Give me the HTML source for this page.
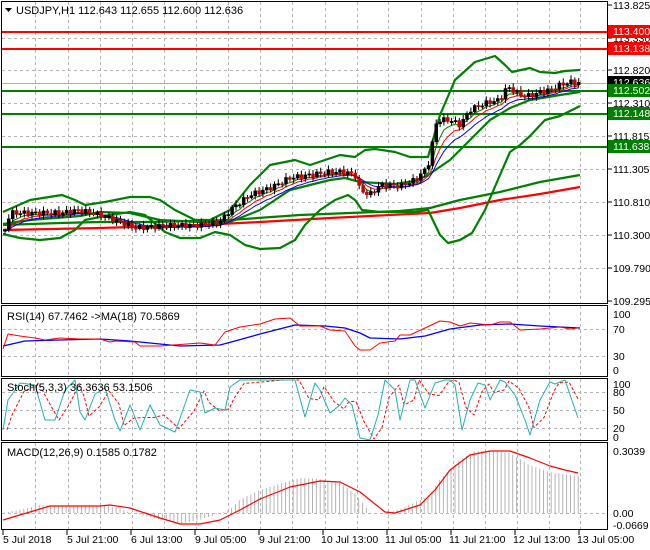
<!DOCTYPE html>
<html><head><meta charset="utf-8"><style>
html,body{margin:0;padding:0;background:#fff;width:650px;height:550px;overflow:hidden}
svg{display:block;font-family:"Liberation Sans",sans-serif;font-size:11px}
</style></head><body>
<svg id="s" width="650" height="550" viewBox="0 0 650 550" xmlns="http://www.w3.org/2000/svg">
<rect width="650" height="550" fill="#fff"/>
<g id="grid" stroke="#b4b4b4" stroke-dasharray="3,3" stroke-width="1"></g>
<g id="dyn"></g>
<!-- panel borders -->
<g fill="none" stroke="#000" stroke-width="1">
<rect x="1.5" y="1.5" width="606" height="302"/>
<rect x="1.5" y="305.5" width="606" height="71"/>
<rect x="1.5" y="378.5" width="606" height="62"/>
<rect x="1.5" y="442.5" width="606" height="87"/>
</g>
<g fill="#000">
<path d="M5 8h7l-3.5 4z"/>
<text x="16" y="14">USDJPY,H1  112.643 112.655 112.600 112.636</text>
<text x="7" y="320">RSI(14) 67.7462  -&gt;MA(18) 70.5869</text>
<text x="7" y="391">Stoch(5,3,3) 36.3636 53.1506</text>
<text x="7" y="456">MACD(12,26,9) 0.1585 0.1782</text>
</g>
<g fill="#000" font-size="10.5">
<text x="613" y="9">113.825</text>
<text x="613" y="42">113.330</text>
<text x="613" y="74">112.820</text>
<text x="613" y="107">112.310</text>
<text x="613" y="140">111.815</text>
<text x="613" y="173">111.305</text>
<text x="613" y="206">110.810</text>
<text x="613" y="239">110.300</text>
<text x="613" y="272">109.790</text>
<text x="613" y="305">109.295</text>
<text x="613" y="318">100</text>
<text x="613" y="333">70</text>
<text x="613" y="360">30</text>
<text x="613" y="374">0</text>
<text x="613" y="388">100</text>
<text x="613" y="396">80</text>
<text x="613" y="414">50</text>
<text x="613" y="432">20</text>
<text x="613" y="441">0</text>
<text x="613" y="455">0.3039</text>
<text x="613" y="517">0.00</text>
<text x="613" y="529">-0.0669</text>
</g>
<g stroke="#000"><path d="M608 5h4M608 38h4M608 70h4M608 103h4M608 136h4M608 169h4M608 202h4M608 235h4M608 268h4M608 301h4"/></g>
<!-- right labels -->
<rect x="608" y="25" width="42" height="13" fill="#f00"/><text x="613" y="35" fill="#fff" font-size="10.5">113.400</text>
<rect x="608" y="42" width="42" height="13" fill="#f00"/><text x="613" y="52" fill="#fff" font-size="10.5">113.138</text>
<rect x="608" y="76" width="42" height="13" fill="#000"/><text x="613" y="86" fill="#fff" font-size="10.5">112.636</text>
<rect x="608" y="84" width="42" height="13" fill="#008000"/><text x="613" y="94" fill="#fff" font-size="10.5">112.502</text>
<rect x="608" y="107" width="42" height="13" fill="#008000"/><text x="613" y="117" fill="#fff" font-size="10.5">112.148</text>
<rect x="608" y="140" width="42" height="13" fill="#008000"/><text x="613" y="150" fill="#fff" font-size="10.5">111.638</text>
<!-- bottom axis -->
<g stroke="#000"><path d="M3 530v5M67 530v5M131 530v5M195 530v5M259 530v5M323 530v5M387 530v5M451 530v5M515 530v5M579 530v5"/></g>
<g fill="#000" font-size="10.5">
<text x="3" y="543">5 Jul 2018</text>
<text x="67" y="543">5 Jul 21:00</text>
<text x="131" y="543">6 Jul 13:00</text>
<text x="195" y="543">9 Jul 05:00</text>
<text x="259" y="543">9 Jul 21:00</text>
<text x="321" y="543">10 Jul 13:00</text>
<text x="385" y="543">11 Jul 05:00</text>
<text x="449" y="543">11 Jul 21:00</text>
<text x="513" y="543">12 Jul 13:00</text>
<text x="577" y="543">13 Jul 05:00</text>
</g>
</svg>
<script>
(function(){
var NS="http://www.w3.org/2000/svg",g=document.getElementById('grid'),d=document.getElementById('dyn');
function el(p,t,a){var e=document.createElementNS(NS,t);for(var k in a)e.setAttribute(k,a[k]);p.appendChild(e);return e;}
var gx=[35,68,100,132,164,196,228,260,292,325,357,388,421,453,485,517,549,580];
var s="";
gx.forEach(function(x){s+="M"+x+".5 2V303M"+x+".5 306V376M"+x+".5 379V440M"+x+".5 443V529";});
[38,70,103,136,169,202,235,268].forEach(function(y){s+="M2 "+y+".5H607";});
[329,356].forEach(function(y){s+="M2 "+y+".5H607";});
[392,410,428].forEach(function(y){s+="M2 "+y+".5H607";});
s+="M2 513.5H607";
el(g,'path',{d:s,fill:'none'});
function interp(P,x){if(x<=P[0][0])return P[0][1];for(var i=1;i<P.length;i++){if(x<=P[i][0]){var a=P[i-1],b=P[i];return a[1]+(b[1]-a[1])*(x-a[0])/(b[0]-a[0]);}}return P[P.length-1][1];}
function line(P,c,w,dash){var s="M"+P.map(function(p){return p[0]+" "+p[1]}).join("L");var a={d:s,fill:'none',stroke:c,'stroke-width':w,'stroke-linejoin':'round'};if(dash)a['stroke-dasharray']=dash;el(d,'path',a);}
// levels
el(d,'path',{d:"M2 83.5H607",stroke:'#b0b0b0','stroke-width':1});
el(d,'path',{d:"M2 32H607M2 49H607",stroke:'#f00','stroke-width':2});
el(d,'path',{d:"M2 91H607M2 114H607M2 147H607",stroke:'#008000','stroke-width':2});
var C=[[5,230],[10,213],[30,213],[60,213],[80,210],[100,215],[120,222],[135,228],[160,226],[200,225],[220,222],[230,210],[250,195],[270,188],[290,178],[310,175],[330,172],[345,172],[355,175],[360,190],[370,195],[380,185],[400,186],[415,180],[425,170],[430,160],[435,125],[440,120],[450,120],[460,125],[470,110],[480,105],[490,102],[500,100],[505,90],[510,88],[520,95],[530,96],[540,92],[550,90],[560,85],[570,82],[578,83]];
var UB=[[3,212],[30,200],[62,195],[75,200],[85,205],[105,202],[130,197],[150,197],[160,200],[175,210],[195,220],[210,220],[230,210],[250,185],[270,165],[295,160],[310,165],[340,155],[355,157],[365,150],[375,149],[395,152],[410,157],[428,157],[440,115],[455,80],[475,62],[495,56],[505,65],[512,72],[530,68],[540,72],[555,73],[565,71],[580,70]];
var LB=[[3,234],[20,238],[40,240],[60,238],[75,230],[85,220],[110,215],[130,212],[145,215],[165,232],[180,238],[200,238],[215,232],[230,235],[245,245],[260,249],[280,248],[295,240],[305,225],[320,210],[335,200],[348,195],[355,200],[362,210],[380,212],[415,212],[428,210],[440,235],[448,243],[460,240],[472,233],[485,210],[500,175],[510,152],[520,145],[530,136],[545,120],[560,116],[580,106]];
var MB=[[3,224],[30,220],[80,216],[100,212],[130,213],[160,220],[200,222],[230,222],[260,210],[290,190],[330,180],[345,178],[360,182],[395,184],[415,181],[428,175],[450,160],[470,140],[490,120],[510,108],[530,100],[560,95],[580,92]];
var SG=[[3,225],[60,223],[100,222],[150,222],[230,220],[300,215],[350,213],[400,211],[430,208],[460,200],[500,192],[540,182],[580,175]];
var RM=[[3,230],[100,228],[200,225],[260,222],[330,218],[430,213],[460,208],[500,200],[540,194],[580,187]];
line(RM,'#f00',2.2);line(SG,'#008000',2.2);line(UB,'#008000',2.2);line(LB,'#008000',2.2);line(MB,'#008000',2.2);
// fast MAs
var xs=[];for(var x=5;x<=579;x+=3.85)xs.push(x);
var cl=xs.map(function(x,i){return interp(C,x)+Math.sin(i*2.3)*2.5;});
function ema(a,n){var k=2/(n+1),r=[a[0]];for(var i=1;i<a.length;i++)r.push(r[i-1]+k*(a[i]-r[i-1]));return r;}
[[4,'#008000'],[7,'#f00'],[11,'#00f']].forEach(function(q){var e=ema(cl,q[0]);line(xs.map(function(x,i){return[x.toFixed(1),(e[i]+1.5).toFixed(1)]}),q[1],1);});
// candles
var prev=cl[0];
xs.forEach(function(x,i){var c=cl[i],o=prev;prev=c;var hi=Math.min(o,c)-1.5-Math.abs(Math.sin(i*1.7))*3,lo=Math.max(o,c)+1.5+Math.abs(Math.cos(i*1.3))*2.5;
el(d,'path',{d:"M"+x.toFixed(1)+" "+hi.toFixed(1)+"V"+lo.toFixed(1),stroke:'#000','stroke-width':1});
var t=Math.min(o,c),h=Math.max(Math.abs(o-c),1.2);var bear=c>o;
el(d,'rect',{x:(x-1.5).toFixed(1),y:t.toFixed(1),width:3,height:h.toFixed(1),fill:bear?'#c00':'#000',stroke:bear?'#c00':'#000','stroke-width':0.5});});
// RSI
line([[3,346],[25,341],[60,340],[100,339],[130,341],[150,343],[180,346],[220,345],[235,341],[260,334],[295,325],[325,326],[345,328],[360,333],[370,338],[400,339],[425,336],[450,329],[480,325],[510,324],[540,326],[580,328]],'#00f',1.3);
line([[3,349],[8,334],[20,336],[35,338],[45,340],[60,338],[80,339],[100,339],[110,342],[115,341],[135,342],[140,346],[160,346],[200,343],[215,345],[225,332],[240,327],[260,324],[275,319],[290,318],[300,326],[320,326],[330,330],[345,331],[355,346],[360,350],[370,350],[380,343],[395,341],[400,335],[410,335],[425,328],[440,321],[450,322],[460,326],[470,323],[490,325],[500,322],[510,322],[520,330],[540,329],[560,327],[570,329],[578,328]],'#f00',1);
// Stoch
var ST=[[3,430],[8,400],[20,383],[35,385],[45,420],[55,420],[65,390],[75,380],[80,412],[85,420],[95,394],[105,388],[115,420],[120,431],[130,405],[140,430],[150,405],[160,425],[175,432],[190,390],[200,392],[205,413],[215,408],[225,410],[230,387],[240,380],[280,380],[295,380],[305,417],[315,383],[320,390],[330,413],[340,405],[345,398],[352,405],[360,438],[370,440],[378,415],[385,380],[395,390],[400,420],[410,380],[415,380],[425,408],[435,383],[445,380],[450,380],[455,385],[462,430],[470,400],[478,383],[485,385],[490,400],[500,380],[505,382],[515,395],[525,420],[530,435],[540,400],[550,382],[555,384],[565,380],[578,418]];
line(ST.map(function(p,i){return[Math.min(p[0]+4,578),i?(p[1]+ST[i-1][1])/2:p[1]]}),'#f00',1,'3,2');
line(ST,'#20b2aa',1);
// MACD hist
var H=[[3,513],[20,510],[40,505],[110,506],[130,512],[150,517],[180,524],[200,520],[230,510],[240,500],[260,490],[300,478],[320,479],[340,483],[355,493],[365,505],[370,513],[390,513],[410,505],[430,495],[440,480],[460,460],[475,451],[490,451],[510,453],[530,465],[550,472],[578,476]];
var hs="";xs.forEach(function(x){var y=interp(H,x);hs+="M"+(x-0.5).toFixed(1)+" 513V"+y.toFixed(1);});
el(d,'path',{d:hs,stroke:'#b4b4b4','stroke-width':1});
line([[3,520],[30,512],[50,506],[100,506],[110,505],[130,508],[160,518],[180,524],[200,524],[220,520],[240,510],[260,499],[290,487],[320,481],[340,482],[360,492],[385,512],[395,513],[420,505],[435,490],[450,470],[470,455],[490,451],[510,451],[530,458],[550,466],[565,470],[578,473]],'#f00',1.2);
})();
</script>
</body></html>
